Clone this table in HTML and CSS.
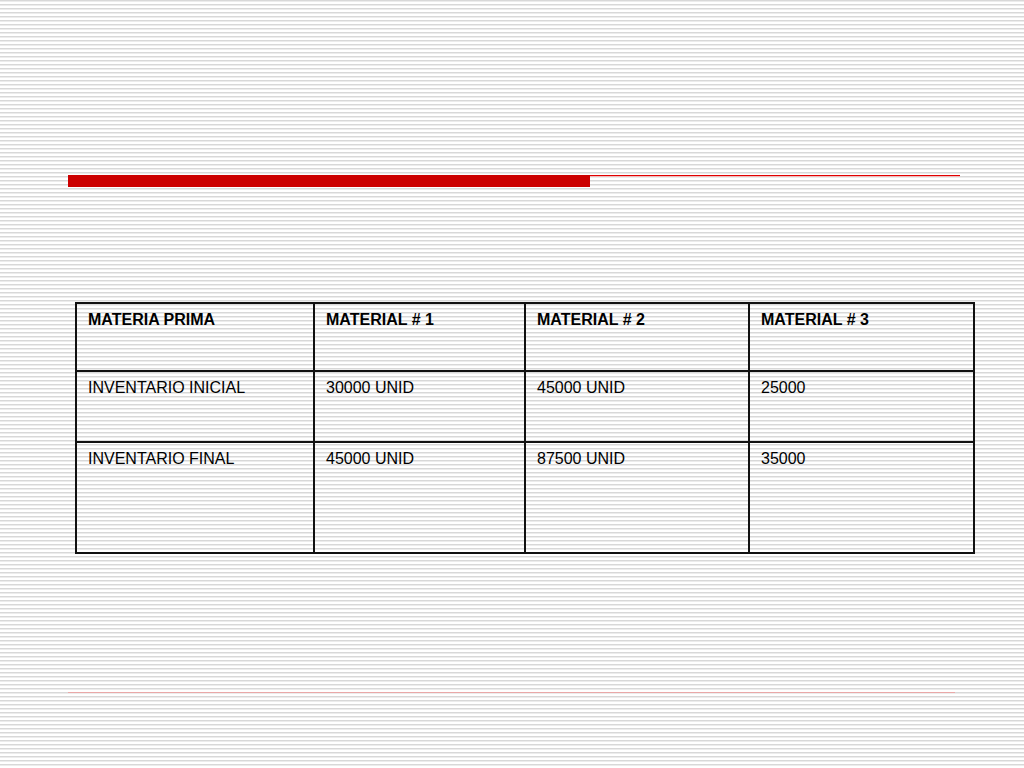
FILE: index.html
```html
<!DOCTYPE html>
<html>
<head>
<meta charset="utf-8">
<link rel="stylesheet" href="styles.css">
</head>
<body>
<div class="slide">
  <div class="rule-top">
    <div class="bar-thick"></div>
    <div class="bar-thin"></div>
  </div>
  <table class="data">
    <colgroup>
      <col class="c1"><col class="c2"><col class="c3"><col class="c4">
    </colgroup>
    <tr class="r1">
      <th>MATERIA PRIMA</th>
      <th>MATERIAL # 1</th>
      <th>MATERIAL # 2</th>
      <th>MATERIAL # 3</th>
    </tr>
    <tr class="r2">
      <td>INVENTARIO INICIAL</td>
      <td>30000 UNID</td>
      <td>45000 UNID</td>
      <td>25000</td>
    </tr>
    <tr class="r3">
      <td>INVENTARIO FINAL</td>
      <td>45000 UNID</td>
      <td>87500 UNID</td>
      <td>35000</td>
    </tr>
  </table>
  <div class="rule-bottom"></div>
</div>
</body>
</html>
```
FILE: styles.css
```css
html, body {
  margin: 0;
  padding: 0;
}
.slide {
  width: 1024px;
  height: 768px;
  overflow: hidden;
  background: repeating-linear-gradient(to bottom,
    #d8d8d8 0px, #d8d8d8 1px,
    #ececec 1px, #ececec 2px,
    #ffffff 2px, #ffffff 4px);
  font-family: "Liberation Sans", Arial, sans-serif;
  color: #000;
  display: flex;
  flex-direction: column;
}
.rule-top {
  display: flex;
  align-items: flex-start;
  margin: 175px 0 0 68px;
}
.bar-thick {
  width: 522px;
  height: 12px;
  background: #cc0000;
}
.bar-thin {
  width: 370px;
  height: 1px;
  background: #e00000;
  border-bottom: 1px solid #f2b8b8;
}
.data {
  margin: 115px 0 0 75px;
  border-collapse: collapse;
  width: 898px;
  table-layout: fixed;
  font-size: 16px;
}
.c1 { width: 238px; }
.c2 { width: 211px; }
.c3 { width: 224px; }
.c4 { width: 225px; }
.data th, .data td {
  border: 2px solid #111;
  text-align: left;
  vertical-align: top;
  padding: 7px 10px 0 11px;
  line-height: 18px;
}
.data th { font-weight: bold; }
.data td { font-weight: normal; }
.r1 { height: 68px; }
.r2 { height: 71px; }
.r3 { height: 111px; }
.rule-bottom {
  margin: 138px 0 0 68px;
  width: 887px;
  height: 1px;
  background: #eaa8a8;
}
```
